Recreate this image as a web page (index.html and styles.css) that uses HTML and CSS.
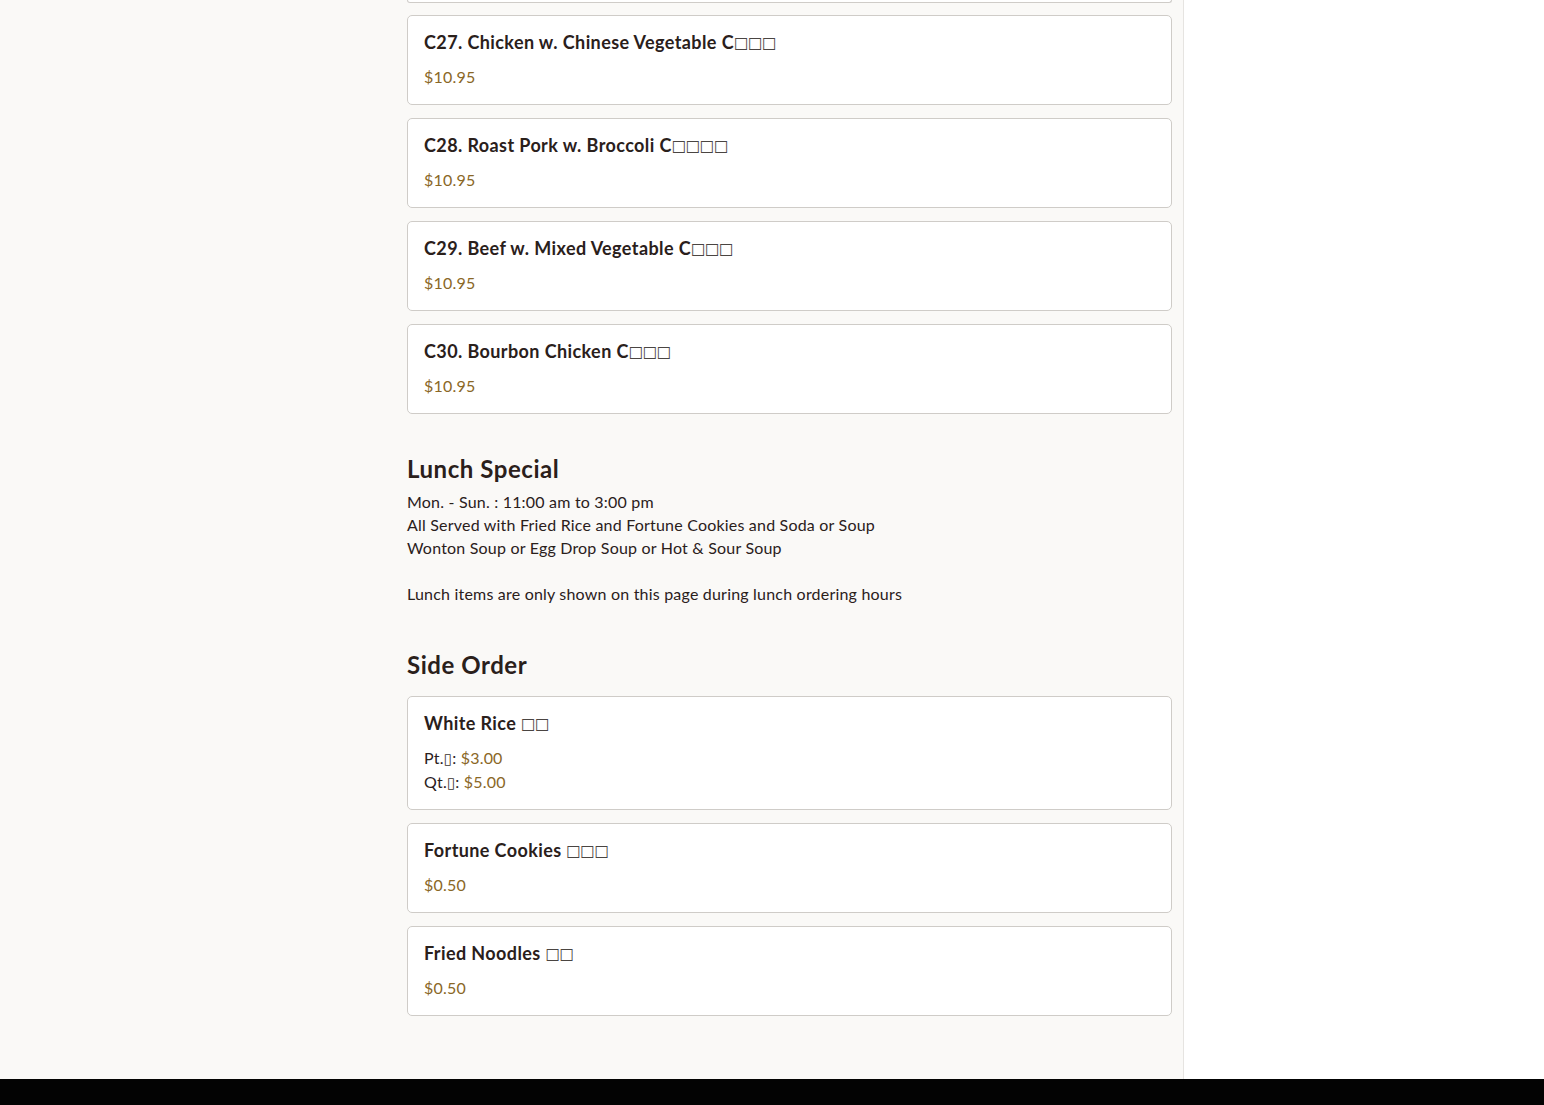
FILE: index.html
```html
<!DOCTYPE html>
<html lang="en">
<head>
<meta charset="utf-8">
<title>Menu</title>
<link rel="stylesheet" href="styles.css">
</head>
<body>
<div class="page">
  <main class="main">
    <div class="content">
      <div class="card-tail"></div>
      <div class="list">
        <div class="card">
          <div class="item-name">C27. Chicken w. Chinese Vegetable C<span class="tofu">□□□</span></div>
          <div class="price">$10.95</div>
        </div>
        <div class="card">
          <div class="item-name">C28. Roast Pork w. Broccoli C<span class="tofu">□□□□</span></div>
          <div class="price">$10.95</div>
        </div>
        <div class="card">
          <div class="item-name">C29. Beef w. Mixed Vegetable C<span class="tofu">□□□</span></div>
          <div class="price">$10.95</div>
        </div>
        <div class="card">
          <div class="item-name">C30. Bourbon Chicken C<span class="tofu">□□□</span></div>
          <div class="price">$10.95</div>
        </div>
      </div>

      <section class="section lunch">
        <h2 class="section-title">Lunch Special</h2>
        <p class="section-desc">Mon. - Sun. : 11:00 am to 3:00 pm<br>All Served with Fried Rice and Fortune Cookies and Soda or Soup<br>Wonton Soup or Egg Drop Soup or Hot &amp; Sour Soup<br><br>Lunch items are only shown on this page during lunch ordering hours</p>
      </section>

      <section class="section side">
        <h2 class="section-title">Side Order</h2>
        <div class="list">
          <div class="card">
            <div class="item-name">White Rice <span class="tofu">□□</span></div>
            <div class="sizes">
              <div class="size">Pt.<span class="tofu-sm">▯</span>: <span class="amt">$3.00</span></div>
              <div class="size">Qt.<span class="tofu-sm">▯</span>: <span class="amt">$5.00</span></div>
            </div>
          </div>
          <div class="card">
            <div class="item-name">Fortune Cookies <span class="tofu">□□□</span></div>
            <div class="price">$0.50</div>
          </div>
          <div class="card">
            <div class="item-name">Fried Noodles <span class="tofu">□□</span></div>
            <div class="price">$0.50</div>
          </div>
        </div>
      </section>
    </div>
  </main>
  <aside class="aside"></aside>
</div>
<footer class="footer"></footer>
</body>
</html>
```

FILE: styles.css
```css
* { box-sizing: border-box; }
html, body { margin: 0; padding: 0; }
body {
  font-family: Lato, "Noto Sans", sans-serif;
  color: #2a201b;
  background: #ffffff;
}
.page {
  display: flex;
  min-height: 1079px;
}
.main {
  width: 1184px;
  background: #faf9f7;
  border-right: 1px solid #e6e4e1;
  padding: 0 12px 63px 407px;
}
.content { width: 765px; }
.card-tail {
  height: 3px;
  background: #fff;
  border: 1px solid #cfccc8;
  border-top: none;
  border-radius: 0 0 5px 5px;
  margin-bottom: 12px;
}
.list {
  display: flex;
  flex-direction: column;
  gap: 13px;
}
.card {
  background: #ffffff;
  border: 1px solid #cfccc8;
  border-radius: 5px;
  padding: 14px 16px 15px;
}
.item-name {
  font-size: 18px;
  font-weight: 700;
  line-height: 24px;
  height: 24px;
  letter-spacing: 0.4px;
  color: #2a201b;
  margin-bottom: 11px;
  white-space: nowrap;
}
.tofu {
  font-family: "DejaVu Sans", sans-serif;
  font-weight: 400;
  font-size: 15.5px;
  line-height: 0;
  letter-spacing: -0.6px;
  vertical-align: 1px;
  color: #4a4542;
}
.tofu-sm {
  font-family: "DejaVu Sans", sans-serif;
  font-size: 15px;
  line-height: 0;
  color: #3a3430;
}
.price, .amt {
  color: #8a6726;
}
.price, .size {
  font-size: 16px;
  line-height: 24px;
  letter-spacing: 0.2px;
}
.section-title {
  font-size: 24px;
  line-height: 32px;
  font-weight: 700;
  letter-spacing: 0.55px;
  margin: 0;
  color: #2a201b;
}
.lunch { margin-top: 39px; }
.lunch .section-title { margin-bottom: 5px; }
.section-desc {
  margin: 0;
  font-size: 16px;
  line-height: 23px;
  letter-spacing: 0.2px;
}
.side { margin-top: 44px; }
.side .section-title { margin-bottom: 15px; }
.aside { flex: 1; background: #ffffff; }
.footer {
  height: 26px;
  background: #030303;
}
```
